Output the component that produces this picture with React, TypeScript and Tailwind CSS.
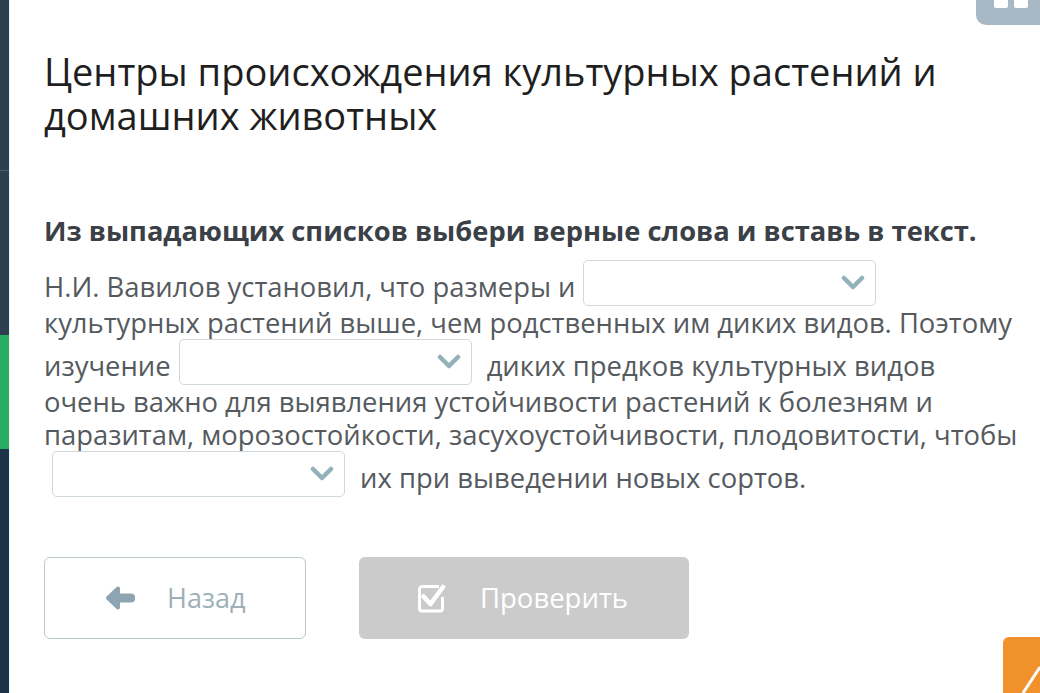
import React from "react";

function Chevron() {
  return (
    <svg viewBox="0 0 24 16" className="w-[24px] h-[16px]" fill="none">
      <path d="M3 3l9 9 9-9" stroke="#93b1b8" strokeWidth={4.5} strokeLinecap="round" strokeLinejoin="round" />
    </svg>
  );
}

// baseline of an overflow-hidden inline-block is its bottom edge, so align-[-9px] drops it 9px below the text baseline
function Select() {
  return (
    <span className="inline-block overflow-hidden align-[-9px] w-[293px] h-[46px] mx-[8px] border border-[#cfd8db] rounded-[5px] bg-white">
      <span className="flex items-center justify-end h-full pr-[10px]">
        <Chevron />
      </span>
    </span>
  );
}

export default function App() {
  return (
    <div className="relative flex min-h-[693px] bg-white overflow-hidden" style={{ fontFamily: '"Open Sans", "Liberation Sans", sans-serif' }}>
      {/* sidebar strip */}
      <div className="flex flex-col w-[9px] shrink-0">
        <div className="h-[170px] bg-[#2d3e50]" />
        <div className="h-[1px] bg-[#4b5c6c]" />
        <div className="h-[164px] bg-[#2d3e50]" />
        <div className="h-[114px] bg-[#27ae60]" />
        <div className="flex-1 bg-[#1c3248]" />
      </div>
      <div className="w-[1px] bg-[#eef4f8]" />

      <main className="flex-1 pl-[34px] pt-[49px]">
        <h1 className="text-[38px] leading-[44px] text-[#1f1f1f] font-normal">
          Центры происхождения культурных растений и
          <br />
          домашних животных
        </h1>

        <p className="mt-[78px] text-[27.3px] leading-[32px] font-bold text-[#3a4046] whitespace-nowrap">
          Из выпадающих списков выбери верные слова и вставь в текст.
        </p>

        <div className="mt-[13px] text-[27.4px] leading-[33px] text-[#555a5e] whitespace-nowrap">
          Н.И. Вавилов установил, что размеры и<Select />
          <br />
          культурных растений выше, чем родственных им диких видов. Поэтому
          <br />
          изучение<Select /> диких предков культурных видов
          <br />
          очень важно для выявления устойчивости растений к болезням и
          <br />
          паразитам, морозостойкости, засухоустойчивости, плодовитости, чтобы
          <br />
          <Select /> их при выведении новых сортов.
        </div>

        <div className="flex gap-[53px] mt-[60px]">
          <button className="flex items-center gap-[32px] pl-[60px] w-[262px] h-[82px] border border-[#b9c6cb] rounded-[6px] bg-white">
            <svg viewBox="0 0 30 26" className="w-[30px] h-[26px]">
              <path d="M3 13L13 3.5V22.5Z" fill="#8ea5b1" stroke="#8ea5b1" strokeWidth={4} strokeLinejoin="round" />
              <path d="M12 13H26" stroke="#8ea5b1" strokeWidth={9} strokeLinecap="round" />
            </svg>
            <span className="text-[27px] text-[#9db0b8]">Назад</span>
          </button>
          <button className="flex items-center gap-[34px] pl-[59px] w-[330px] h-[82px] rounded-[6px] bg-[#cbcbcb]">
            <svg viewBox="0 0 28 30" className="w-[28px] h-[30px]" fill="none">
              <path d="M24.5 14v11.5a2.5 2.5 0 0 1-2.5 2.5H4a2.5 2.5 0 0 1-2.5-2.5V6A2.5 2.5 0 0 1 4 3.5h17" stroke="white" strokeWidth={3} />
              <path d="M5.5 13.5l7 7.5L25 4" stroke="white" strokeWidth={4.5} strokeLinecap="round" strokeLinejoin="round" />
            </svg>
            <span className="text-[27.5px] text-white">Проверить</span>
          </button>
        </div>
      </main>

      {/* top-right control */}
      <div className="absolute right-0 top-0 w-[64px] h-[25px] bg-[#a8b9c5] rounded-bl-[10px] flex gap-[6px] pl-[18px]">
        <div className="w-[14px] h-[8px] bg-white rounded-b-[2px]" />
        <div className="w-[14px] h-[8px] bg-white rounded-b-[2px]" />
      </div>

      {/* bottom-right tab */}
      <div className="absolute right-0 bottom-0 w-[37px] h-[56px] bg-[#f0912c] rounded-tl-[6px] overflow-hidden">
        <svg viewBox="0 0 37 56" className="w-full h-full">
          <path d="M20 56L37 30" stroke="white" strokeWidth={3} />
        </svg>
      </div>
    </div>
  );
}
